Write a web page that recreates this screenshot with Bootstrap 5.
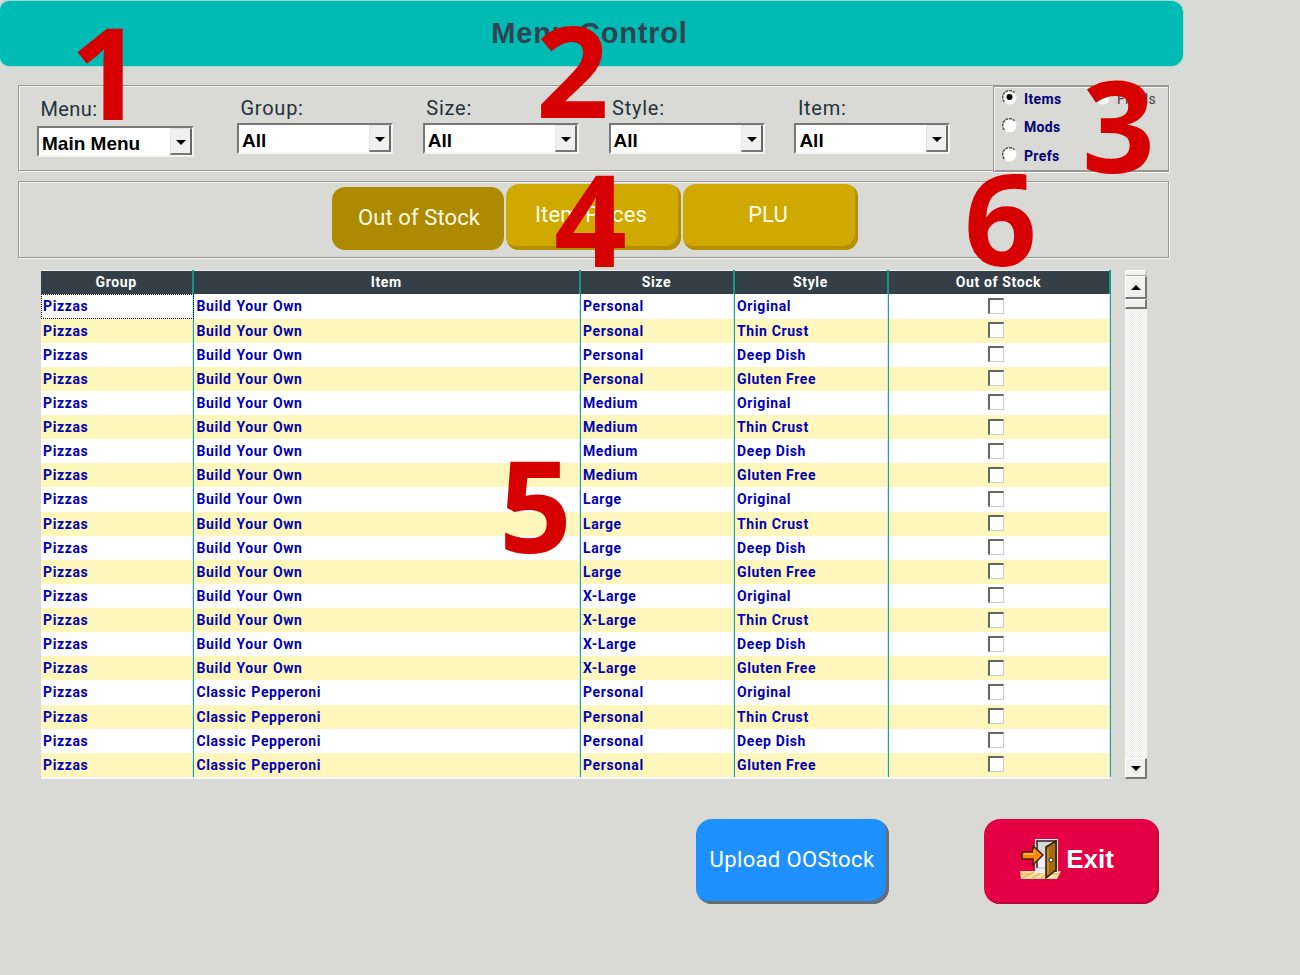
<!DOCTYPE html>
<html lang="en">
<head>
<meta charset="utf-8">
<title>Menu Control</title>
<link rel="stylesheet" href="https://cdn.jsdelivr.net/npm/bootstrap@5.3.0/dist/css/bootstrap.min.css">
<style>
body{background:#d9dad5;width:1300px;height:975px;overflow:hidden;font-family:Roboto,"Liberation Sans",sans-serif;color:#26323a;line-height:1}
.titlebar{width:1183px;height:65px;margin-top:1px;background:#00bbb4;border-radius:9px 12px 12px 9px;box-shadow:0 0 0 1px #a5d8d3;font:bold 29px/1 "Liberation Sans",sans-serif;letter-spacing:.8px;color:#2f4350;padding:0 4px 1px 0}
.etched{border:1px solid #999a97;box-shadow:inset 1px 1px #f4f5f2,1px 1px #f4f5f2}
.filters{width:1151px;height:86px;margin:19px 0 0 18px}
.filter-row{padding:12px 0 0 18px}
.tabs{width:1151px;height:77px;margin:10px 0 0 18px;padding-left:313px}
.filter{width:156px;margin-right:29.8px}
.filter.first{width:157px;margin-right:43px;padding-top:1px}
.filter label{font-size:20px;letter-spacing:.75px;height:25px;padding-left:3.5px}
.filter.first label{height:27px;letter-spacing:.4px}
.combo{height:31px;background:#fff;border:2px solid;border-color:#777 #f4f4f2 #f4f4f2 #777;box-shadow:inset -1px 0 #888;font:bold 19px/1 "Liberation Sans",sans-serif;color:#000;padding-left:3px}
.combo>span:first-child{padding-top:3px}
.drop{width:22px;height:27px;background:#f0f0f0;border:1px solid #e4e4e4;border-right:2px solid #666;border-bottom:2px solid #777;padding:2px 0 0 1px}
.modes{width:176px;height:86px;margin:0 -1px 0 auto;padding:3px 0 0 8px}
.mode{font:bold 14px/1 Roboto,sans-serif;letter-spacing:.35px;color:#000078;height:28.3px;gap:6px}
.mode span{padding-top:2px}
.tab{border-radius:13px;height:66px;width:175px;background:#cfa900;color:#fffbe9;font-size:22px;letter-spacing:.1px;box-shadow:inset -3px -4px 0 #b38e00;margin:2px 2px 0 0;padding:0 5px 5px 0}
.tab.on{width:172px;height:63px;background:#ae8a00;margin-top:5px;box-shadow:none;padding:0 0 2px 2px}
.grid-area{margin:12px 0 0 41px;height:509px}
.stock{width:1070px;height:509px;background:#fff;font-weight:bold;font-size:14px;color:#0000b4}
.line{display:grid;grid-template-columns:153.4px 386.6px 154px 154px 1fr;height:24.13px}
.line>div{display:flex;align-items:center;padding:0 0 0 2px;border-right:1px solid #2c9a90;box-shadow:inset -1px 0 #bff3ee;white-space:nowrap;letter-spacing:.62px}
.line>div:nth-child(2){word-spacing:.8px}
.line:nth-child(odd){background:#fff6bb}
.line.heads{background:#343f47;color:#fff;height:24.4px;box-shadow:inset 0 1px #eee}
.line.heads>div{justify-content:center;padding:0 1px 1px 0;box-shadow:none;border-right:2px solid #189488}
.line .focused{outline:1px dotted #000;outline-offset:-1px}
.tick{width:16px;height:16px;background:#fff;border:2px solid #666;border-right:1px solid #ccc;border-bottom:1px solid #ccc}
.line>div.c{justify-content:center;padding:0 7px 1px 0}
.scroller{width:22px;margin-left:14px;background:repeating-conic-gradient(#fff 0 25%,#eaeaea 0 50%) 0 0/2px 2px}
.knob{background:#f1f1f0;border:1px solid #fff;border-right:2px solid #777;border-bottom:2px solid #777}
.knob.stub{border-bottom:1px solid #aaa;border-right-color:#ccc}
.actions{margin:40px 0 0 696px}
.action{height:85px;border-radius:16px;color:#fff;border:0}
.upload{width:193px;background:#1e90ff;box-shadow:inset -3px -3px 0 #696c70;font-size:22px;letter-spacing:.35px;padding:0 1px 4px 0}
.exit{width:175px;margin-left:95px;background:#e50045;box-shadow:inset -2px -2px 0 #b50a3c;font:bold 26px/1 "Liberation Sans",sans-serif;padding:0 9px 5px 0;gap:4px}
.callout-no{position:absolute;font:bold 127.5px/1 "Open Sans","Noto Sans",sans-serif;color:#d70000}
</style>
</head>
<body class="position-relative">
<header class="titlebar d-flex align-items-center justify-content-center">Menu Control</header>

<section class="filters etched d-flex">
  <div class="filter-row d-flex" id="filters"></div>
  <div class="modes etched d-flex">
    <div style="width:93px">
      <div class="mode d-flex"><svg width="16" height="16"><use href="#radio"/><circle cx="7.500" cy="7" r="3" fill="#000"/></svg><span>Items</span></div>
      <div class="mode d-flex"><svg width="16" height="16"><use href="#radio"/></svg><span>Mods</span></div>
      <div class="mode d-flex"><svg width="16" height="16"><use href="#radio"/></svg><span>Prefs</span></div>
    </div>
    <div class="mode d-flex fw-normal" style="color:#444"><svg width="16" height="16"><use href="#radio"/></svg><span>Fields</span></div>
  </div>
</section>

<section class="tabs etched d-flex">
  <div class="tab on d-flex align-items-center justify-content-center">Out of Stock</div>
  <div class="tab d-flex align-items-center justify-content-center">Item Prices</div>
  <div class="tab d-flex align-items-center justify-content-center">PLU</div>
</section>

<main class="grid-area d-flex">
  <div class="stock" id="stock">
    <div class="line heads"><div>Group</div><div>Item</div><div>Size</div><div>Style</div><div>Out of Stock</div></div>
  </div>
  <div class="scroller d-flex flex-column">
    <div class="knob stub" style="height:6px"></div>
    <div class="knob d-flex align-items-center justify-content-center" style="height:23px"><svg width="10" height="5"><path d="M0 5L5 0L10 5Z"/></svg></div>
    <div class="knob" style="height:10px"></div>
    <div class="knob d-flex align-items-center justify-content-center mt-auto" style="height:21px"><svg width="10" height="5"><path d="M0 0H10L5 5Z"/></svg></div>
  </div>
</main>

<footer class="actions d-flex">
  <button class="action upload">Upload OOStock</button>
  <button class="action exit d-flex align-items-center justify-content-center">
    <svg width="42" height="42" viewBox="0 0 42 42">
      <path d="M0 33H41L37 41H1Z" fill="#ffe2a0"/><path d="M3 40L14 34M12 40L23 34M21 40L26 37M1 36H12M32 36H40" stroke="#eeb765" stroke-width="1.500"/>
      <path d="M15 1H38V35H15Z" fill="#eee"/><path d="M17 30V3H36V34" fill="#d5d8d2" stroke="#222" stroke-width="1.500"/><path d="M18 22L26 14V29H18Z" fill="#eef"/>
      <path d="M26 9L36 3V32L26 40Z" fill="#a96b12" stroke="#2e1c03" stroke-width="1.500"/><path d="M28 11V36" stroke="#cc913b" stroke-width="1.500"/><circle cx="31" cy="22" r="2" fill="#fff" stroke="#222"/>
      <path d="M2 14H13V8L23 17L13 27V21H2Z" fill="#ff850e" stroke="#3b2400" stroke-width="1.500"/><path d="M4 16H14V12" fill="none" stroke="#ffc04b" stroke-width="1.500"/>
    </svg>
    <span>Exit</span>
  </button>
</footer>

<svg width="0" height="0" class="position-absolute"><defs><g id="radio"><circle cx="7.500" cy="7.500" r="7" fill="#fff"/><path d="M2.500 12A6.500 6.500 0 0 1 12.500 2.800" fill="none" stroke="#555" stroke-width="1.500" stroke-dasharray="3 .7"/></g></defs></svg>

<div class="callout-no" style="left:70px;top:7px">1</div>
<div class="callout-no" style="left:536px;top:5px">2</div>
<div class="callout-no" style="left:1082px;top:60px">3</div>
<div class="callout-no" style="left:554px;top:154px">4</div>
<div class="callout-no" style="left:499px;top:440px">5</div>
<div class="callout-no" style="left:964px;top:153px">6</div>

<script src="https://cdn.jsdelivr.net/npm/bootstrap@5.3.0/dist/js/bootstrap.bundle.min.js"></script>
<script>
document.getElementById('filters').innerHTML = [['Menu','Main Menu'],['Group','All'],['Size','All'],['Style','All'],['Item','All']]
  .map(([name, value], i) => `<div class="filter${i ? '' : ' first'}"><label class="d-block">${name}:</label>
  <div class="combo d-flex align-items-center justify-content-between"><span>${value}</span><span class="drop d-flex align-items-center justify-content-center"><svg width="10" height="5"><path d="M0 0H10L5 5Z"/></svg></span></div></div>`).join('');
const sizes = ['Personal','Medium','Large','X-Large'], styles = ['Original','Thin Crust','Deep Dish','Gluten Free'];
let rows = '';
for (let i = 0; i < 20; i++)
  rows += `<div class="line"><div class="${i ? '' : 'focused'}">Pizzas</div><div>${i < 16 ? 'Build Your Own' : 'Classic Pepperoni'}</div><div>${sizes[(i >> 2) % 4]}</div><div>${styles[i % 4]}</div><div class="c"><span class="tick"></span></div></div>`;
document.getElementById('stock').insertAdjacentHTML('beforeend', rows);
</script>
</body>
</html>
